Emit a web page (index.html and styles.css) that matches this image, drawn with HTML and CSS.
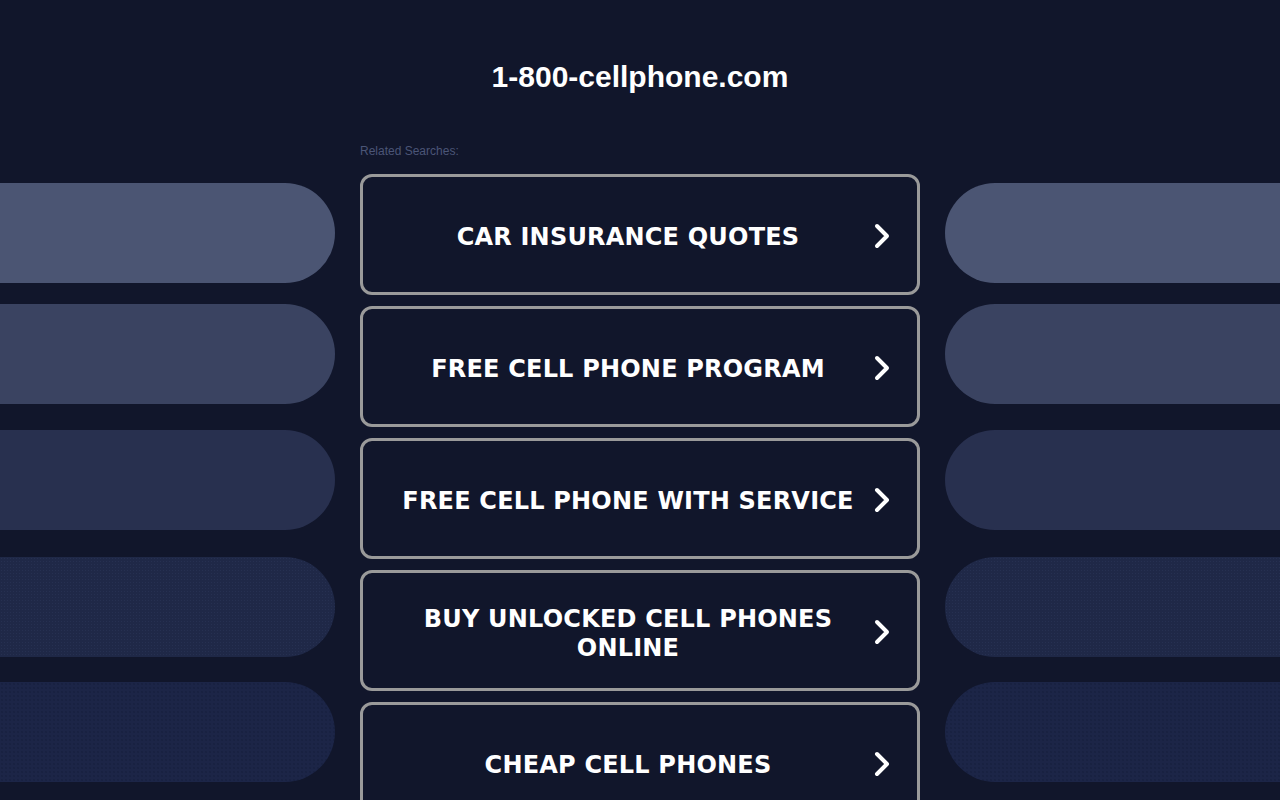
FILE: index.html
```html
<!DOCTYPE html>
<html>
<head>
<meta charset="utf-8">
<link rel="stylesheet" href="styles.css">
</head>
<body>
<div class="page">
  <div class="side side-left">
    <div class="pill p1"></div>
    <div class="pill p2"></div>
    <div class="pill p3"></div>
    <div class="pill p4"></div>
    <div class="pill p5"></div>
  </div>
  <main class="center">
    <h1 class="title">1-800-cellphone.com</h1>
    <div class="related">Related Searches:</div>
    <div class="list">
      <a class="btn" href="#"><span class="label">CAR INSURANCE QUOTES</span><svg class="chev" viewBox="0 0 20 26"><path d="M5 3 L15 13 L5 23" /></svg></a>
      <a class="btn" href="#"><span class="label">FREE CELL PHONE PROGRAM</span><svg class="chev" viewBox="0 0 20 26"><path d="M5 3 L15 13 L5 23" /></svg></a>
      <a class="btn" href="#"><span class="label">FREE CELL PHONE WITH SERVICE</span><svg class="chev" viewBox="0 0 20 26"><path d="M5 3 L15 13 L5 23" /></svg></a>
      <a class="btn" href="#"><span class="label">BUY UNLOCKED CELL PHONES ONLINE</span><svg class="chev" viewBox="0 0 20 26"><path d="M5 3 L15 13 L5 23" /></svg></a>
      <a class="btn" href="#"><span class="label">CHEAP CELL PHONES</span><svg class="chev" viewBox="0 0 20 26"><path d="M5 3 L15 13 L5 23" /></svg></a>
    </div>
  </main>
  <div class="side side-right">
    <div class="pill p1"></div>
    <div class="pill p2"></div>
    <div class="pill p3"></div>
    <div class="pill p4"></div>
    <div class="pill p5"></div>
  </div>
</div>
</body>
</html>
```

FILE: styles.css
```css
html, body {
  margin: 0;
  padding: 0;
  background: #11162b;
  height: 800px;
  overflow: hidden;
}

.page {
  display: flex;
  gap: 25px;
  width: 1280px;
}

.side {
  width: 335px;
  flex: 0 0 335px;
  display: flex;
  flex-direction: column;
}

.pill {
  height: 100px;
}

.side-left .pill { border-radius: 0 50px 50px 0; }
.side-right .pill { border-radius: 50px 0 0 50px; }

.p1 { margin-top: 183px; background: #4b5573; }
.p2 { margin-top: 21px; background: #3a4361; }
.p3 { margin-top: 26px; background: #28304f; }
.p4 {
  margin-top: 27px;
  background-color: #1f2847;
  background-image: radial-gradient(rgba(80, 95, 140, 0.15) 0.6px, transparent 0.9px);
  background-size: 3px 3px;
}
.p5 {
  margin-top: 25px;
  background-color: #1c2547;
  background-image: radial-gradient(rgba(10, 15, 35, 0.25) 0.6px, transparent 0.9px);
  background-size: 4px 4px;
}

.center {
  width: 560px;
  flex: 0 0 560px;
  display: flex;
  flex-direction: column;
}

.title {
  margin: 58px 0 0;
  font-family: "Liberation Sans", Arial, sans-serif;
  font-weight: bold;
  font-size: 30px;
  line-height: 38px;
  color: #ffffff;
  text-align: center;
}

.related {
  margin-top: 48px;
  font-family: "Liberation Sans", Arial, sans-serif;
  font-size: 12px;
  line-height: 14px;
  color: #4b5577;
}

.list {
  margin-top: 16px;
  display: flex;
  flex-direction: column;
  gap: 11px;
}

.btn {
  box-sizing: border-box;
  height: 121px;
  border: 3px solid #9a9a9a;
  border-radius: 12px;
  display: flex;
  align-items: center;
  padding: 0 25px 0 31px;
  text-decoration: none;
  color: #ffffff;
}

.label {
  flex: 1;
  text-align: center;
  padding-top: 6px;
  font-family: "DejaVu Sans", Verdana, sans-serif;
  font-weight: bold;
  font-size: 24px;
  line-height: 29px;
  letter-spacing: 0.2px;
}

.chev {
  width: 20px;
  height: 26px;
  margin-left: 10px;
  margin-top: 3px;
  flex: 0 0 20px;
}

.chev path {
  fill: none;
  stroke: #ffffff;
  stroke-width: 4;
  stroke-linecap: round;
  stroke-linejoin: round;
}
```
